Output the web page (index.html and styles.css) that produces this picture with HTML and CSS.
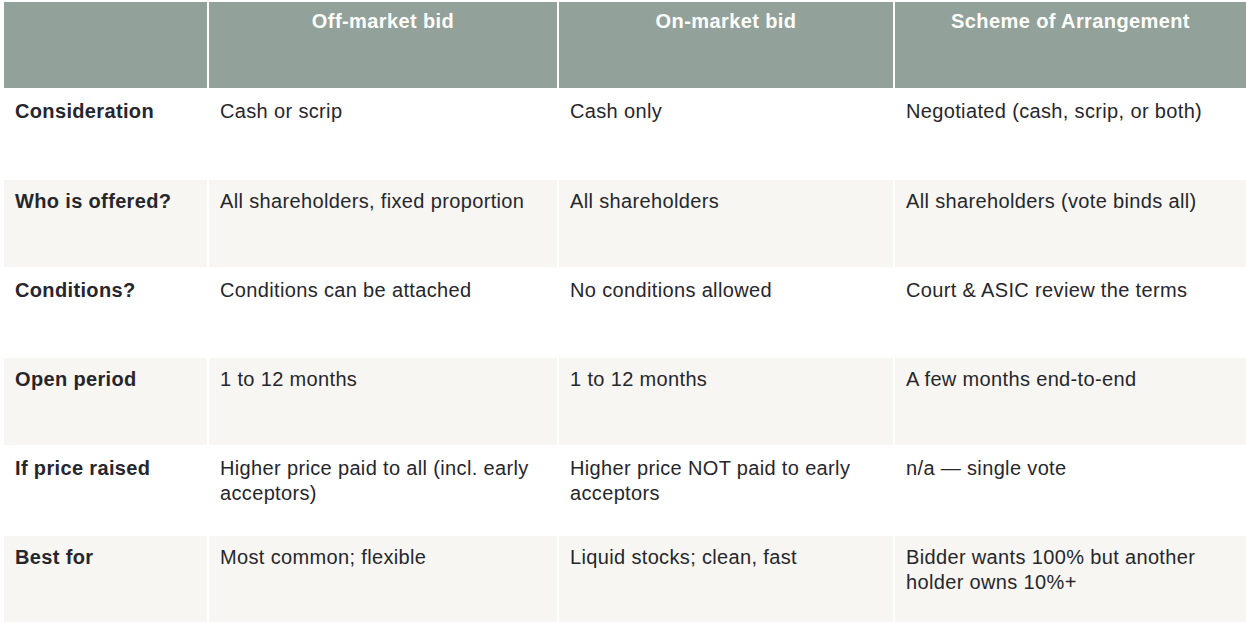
FILE: index.html
```html
<!DOCTYPE html>
<html>
<head>
<meta charset="utf-8">
<link rel="stylesheet" href="styles.css">
</head>
<body>
<table class="cmp">
  <colgroup>
    <col class="c1"><col class="c2"><col class="c3"><col class="c4">
  </colgroup>
  <thead>
    <tr class="head">
      <th></th>
      <th>Off-market bid</th>
      <th>On-market bid</th>
      <th>Scheme of Arrangement</th>
    </tr>
  </thead>
  <tbody>
    <tr class="r first">
      <td class="lbl">Consideration</td>
      <td>Cash or scrip</td>
      <td>Cash only</td>
      <td>Negotiated (cash, scrip, or both)</td>
    </tr>
    <tr class="r alt">
      <td class="lbl">Who is offered?</td>
      <td>All shareholders, fixed proportion</td>
      <td>All shareholders</td>
      <td>All shareholders (vote binds all)</td>
    </tr>
    <tr class="r">
      <td class="lbl">Conditions?</td>
      <td>Conditions can be attached</td>
      <td>No conditions allowed</td>
      <td>Court &amp; ASIC review the terms</td>
    </tr>
    <tr class="r alt">
      <td class="lbl">Open period</td>
      <td>1 to 12 months</td>
      <td>1 to 12 months</td>
      <td>A few months end-to-end</td>
    </tr>
    <tr class="r">
      <td class="lbl">If price raised</td>
      <td>Higher price paid to all (incl. early<br>acceptors)</td>
      <td>Higher price NOT paid to early<br>acceptors</td>
      <td>n/a — single vote</td>
    </tr>
    <tr class="r alt">
      <td class="lbl">Best for</td>
      <td>Most common; flexible</td>
      <td>Liquid stocks; clean, fast</td>
      <td>Bidder wants 100% but another<br>holder owns 10%+</td>
    </tr>
  </tbody>
</table>
</body>
</html>
```
FILE: styles.css
```css
html, body {
  margin: 0;
  padding: 0;
  background: #ffffff;
  overflow: hidden;
}
body {
  font-family: "Liberation Sans", Arial, sans-serif;
  color: #26262d;
}
.cmp {
  border-collapse: separate;
  border-spacing: 2px;
  table-layout: fixed;
  width: 1262px;
  margin: 0 0 0 2px;
}
.c1 { width: 203px; }
.c2 { width: 348px; }
.c3 { width: 334px; }
.c4 { width: 369px; }
.head th {
  background: #92a199;
  color: #ffffff;
  font-weight: bold;
  font-size: 20px;
  line-height: 24px;
  height: 86px;
  padding: 7px 0 0 0;
  vertical-align: top;
  text-align: center;
  box-sizing: border-box;
  letter-spacing: 0.4px;
}
.r td {
  font-size: 20px;
  line-height: 25px;
  height: 87px;
  box-sizing: border-box;
  vertical-align: top;
  padding: 9px 11px 0 11px;
  letter-spacing: 0.35px;
}
.r.first td { height: 88px; }
.r.alt td { background: #f7f6f2; }
.lbl { font-weight: bold; }
.head th:nth-child(4) { padding-right: 18px; }
```
